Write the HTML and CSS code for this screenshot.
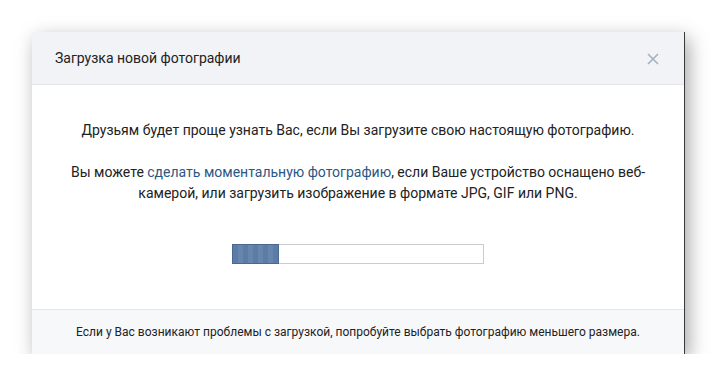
FILE: index.html
```html
<!DOCTYPE html>
<html lang="ru">
<head>
  <meta charset="UTF-8">
  <title>Загрузка новой фотографии</title>
  <link rel="stylesheet" href="styles.css">
</head>
<body>

  <div class="okno">
    <div class="okno-shapka">
      <span class="okno-zagolovok">Загрузка новой фотографии</span>
      <span class="zakryt">
        <svg width="12" height="12" viewBox="0 0 12 12">
          <path d="M1 1 L11 11 M11 1 L1 11" stroke="#a6b1c0" stroke-width="1.6" fill="none"/>
        </svg>
      </span>
    </div>

    <div class="okno-telo">
      <p class="tekst">Друзьям будет проще узнать Вас, если Вы загрузите свою настоящую фотографию.</p>
      <p class="tekst vtoroy">Вы можете <a href="#">сделать моментальную фотографию</a>, если Ваше устройство оснащено веб-камерой, или загрузить изображение в формате JPG, GIF или PNG.</p>

      <div class="progress">
        <div class="progress-zapolnenie" style="width: 47px"></div>
      </div>
    </div>

    <div class="okno-podval">
      Если у Вас возникают проблемы с загрузкой, попробуйте выбрать фотографию меньшего размера.
    </div>
  </div>

</body>
</html>
```

FILE: styles.css
```css
body {
  margin: 0;
  background-color: #fff;
  font-family: Roboto, "Open Sans", sans-serif;
  color: #222;
}

.okno {
  margin: 32px 0 0 32px;
  width: 652px;
  background: #fff;
  border-right: 1px solid #3a3a3a;
  box-shadow: 4px 6px 18px rgba(0,0,0,0.35);
}

.okno-shapka {
  height: 52px;
  background-color: #f2f3f6;
  border-bottom: 1px solid #e4e6ea;
  display: flex;
  align-items: center;
  justify-content: space-between;
  padding: 0 25px 0 23px;
}

.okno-zagolovok {
  font-size: 14px;
  color: #222;
}

.zakryt {
  display: flex;
  margin-top: 1px;
}

.okno-telo {
  padding: 35px 34px 45px;
  text-align: center;
  font-size: 14px;
  line-height: 21px;
  color: #222;
}

.tekst {
  margin: 0;
}

.tekst.vtoroy {
  margin-top: 21px;
}

.tekst a {
  color: #2a5885;
  text-decoration: none;
}

.progress {
  margin: 40px auto 0;
  width: 250px;
  height: 18px;
  border: 1px solid #cbcbcb;
  background: #fff;
  text-align: left;
}

.progress-zapolnenie {
  box-sizing: border-box;
  border: 1px solid #4a6890;
  margin: -1px 0 0 -1px;
  height: 20px;
  background: repeating-linear-gradient(90deg, #5b7ca4 0 5px, #6686ad 5px 10px);
}

.okno-podval {
  height: 44px;
  background-color: #f7f8fa;
  border-top: 1px solid #e4e6ea;
  display: flex;
  align-items: center;
  justify-content: center;
  font-size: 12px;
  color: #222;
}
```
